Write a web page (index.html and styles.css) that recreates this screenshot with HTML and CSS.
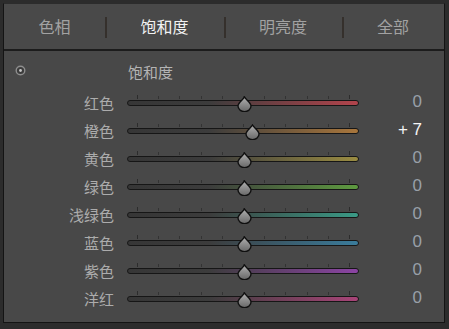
FILE: index.html
```html
<!DOCTYPE html>
<html lang="zh-CN">
<head>
    <meta charset="UTF-8">
    <title>HSL 饱和度</title>
    <link rel="stylesheet" href="styles.css">
</head>
<body>
    <div class="panel">
        <div class="tabs">
            <div class="tab">色相</div>
            <div class="tab active">饱和度</div>
            <div class="tab">明亮度</div>
            <div class="tab">全部</div>
        </div>

        <div class="content">
            <div class="header">
                <svg class="target" width="11" height="11" viewBox="0 0 11 11">
                    <circle cx="5.5" cy="5.5" r="4.3" fill="#3c3c3c" stroke="#8e8e8e" stroke-width="1.4"/>
                    <circle cx="5.5" cy="5.5" r="1.4" fill="#c8c8c8"/>
                </svg>
                <span class="title">饱和度</span>
            </div>

            <div class="row">
                <span class="label">红色</span>
                <div class="slider red"><div class="bar"></div><span class="thumb" style="left: 110px"></span></div>
                <span class="value">0</span>
            </div>
            <div class="row">
                <span class="label">橙色</span>
                <div class="slider orange"><div class="bar"></div><span class="thumb" style="left: 118px"></span></div>
                <span class="value changed">+ 7</span>
            </div>
            <div class="row">
                <span class="label">黄色</span>
                <div class="slider yellow"><div class="bar"></div><span class="thumb" style="left: 110px"></span></div>
                <span class="value">0</span>
            </div>
            <div class="row">
                <span class="label">绿色</span>
                <div class="slider green"><div class="bar"></div><span class="thumb" style="left: 110px"></span></div>
                <span class="value">0</span>
            </div>
            <div class="row">
                <span class="label">浅绿色</span>
                <div class="slider aqua"><div class="bar"></div><span class="thumb" style="left: 110px"></span></div>
                <span class="value">0</span>
            </div>
            <div class="row">
                <span class="label">蓝色</span>
                <div class="slider blue"><div class="bar"></div><span class="thumb" style="left: 110px"></span></div>
                <span class="value">0</span>
            </div>
            <div class="row">
                <span class="label">紫色</span>
                <div class="slider purple"><div class="bar"></div><span class="thumb" style="left: 110px"></span></div>
                <span class="value">0</span>
            </div>
            <div class="row">
                <span class="label">洋红</span>
                <div class="slider magenta"><div class="bar"></div><span class="thumb" style="left: 110px"></span></div>
                <span class="value">0</span>
            </div>
        </div>
    </div>
</body>
</html>
```

FILE: styles.css
```css
body {
    margin: 0;
    padding: 3px 4px 0 3px;
    height: 329px;
    box-sizing: border-box;
    background: #2c2c2c;
    font-family: "Noto Sans CJK SC", "Noto Sans", sans-serif;
}

.panel {
    width: 442px;
    height: 320px;
    box-sizing: border-box;
    border: 1px solid #141414;
    border-top-color: #2c2c2c;
    background: #484848;
}

.tabs {
    display: grid;
    grid-template-columns: 101px 119px 118px 102px;
    height: 45px;
    border-bottom: 2px solid #1c1c1c;
    background: #494949;
}

.tab {
    position: relative;
    display: flex;
    align-items: center;
    justify-content: center;
    padding-bottom: 1px;
    font-size: 16px;
    color: #a2a2a2;
}

.tab + .tab::before {
    content: "";
    position: absolute;
    left: 0;
    top: 13px;
    width: 2px;
    height: 21px;
    background: #35302c;
}

.tab.active {
    color: #f2f2f2;
}

.header {
    display: flex;
    height: 37px;
}

.target {
    margin: 14px 0 0 11px;
}

.title {
    margin: 11px 0 0 102px;
    font-size: 15px;
    line-height: 20px;
    color: #b4b4b4;
}

.row {
    display: grid;
    grid-template-columns: 110px 232px 50px;
    column-gap: 13px;
    align-items: center;
    height: 28px;
}

.label {
    text-align: right;
    font-size: 15px;
    color: #acacac;
}

.value {
    text-align: right;
    font-size: 17px;
    font-family: "Liberation Sans", sans-serif;
    color: #98a0a8;
}

.value.changed {
    color: #f4f4f4;
}

.slider {
    position: relative;
    height: 28px;
    /* tick marks */
    background:
        linear-gradient(#2c2c2c, #2c2c2c) 10px 7px / 1px 4px no-repeat,
        linear-gradient(#2c2c2c, #2c2c2c) 222px 7px / 1px 4px no-repeat,
        repeating-linear-gradient(to right, transparent 0 10px, #333 10px 11px, transparent 11px 21.2px) 0 8px / 232px 3px no-repeat;
}

.bar {
    position: absolute;
    left: 0;
    right: 0;
    top: 12px;
    height: 4px;
    border: 1px solid #161616;
    border-radius: 3px;
    --c: #888;
    background: linear-gradient(to right, #363636 0%, #3c3c3c 35%, var(--c) 100%);
}

.red .bar { --c: #b2444c; }
.orange .bar { --c: #a8763c; }
.yellow .bar { --c: #9a8c42; }
.green .bar { --c: #5e9a40; }
.aqua .bar { --c: #3a9a86; }
.blue .bar { --c: #3a7c9c; }
.purple .bar { --c: #8c44a4; }
.magenta .bar { --c: #a84478; }

.thumb {
    position: absolute;
    top: 8px;
    width: 15px;
    height: 16px;
    background: url("data:image/svg+xml;utf8,<svg xmlns='http://www.w3.org/2000/svg' width='15' height='16' viewBox='0 0 15 16'><defs><linearGradient id='g' x1='0' y1='0' x2='0' y2='1'><stop offset='0' stop-color='%23b0b0b0'/><stop offset='1' stop-color='%23686868'/></linearGradient></defs><path d='M7.5 1 C9 4 14 6.5 14 10 A6.5 5.6 0 0 1 1 10 C1 6.5 6 4 7.5 1 Z' fill='url(%23g)' stroke='%23101010' stroke-width='1.4'/></svg>") no-repeat;
}
```
